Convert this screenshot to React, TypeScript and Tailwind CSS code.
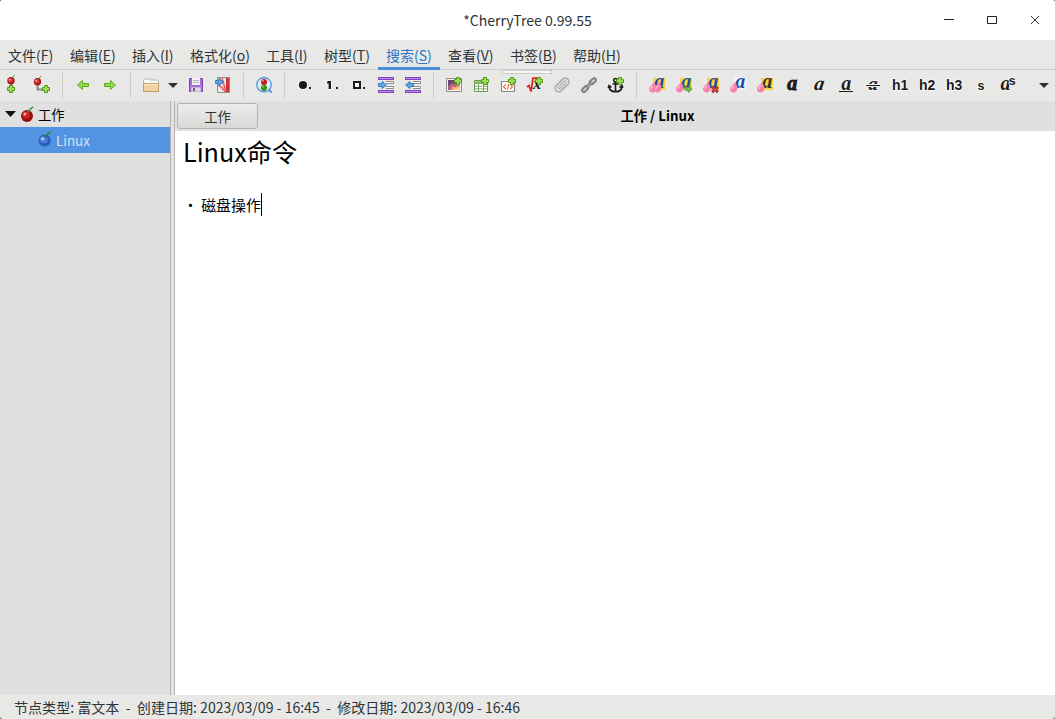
import type { ReactNode } from "react";

const menus = [
  { label: "文件", key: "F", w: "w-[62px]" },
  { label: "编辑", key: "E", w: "w-[62px]" },
  { label: "插入", key: "I", w: "w-[58px]" },
  { label: "格式化", key: "o", w: "w-[76px]" },
  { label: "工具", key: "I", w: "w-[58px]" },
  { label: "树型", key: "T", w: "w-[62px]" },
  { label: "搜索", key: "S", w: "w-[62px]", active: true },
  { label: "查看", key: "V", w: "w-[62px]" },
  { label: "书签", key: "B", w: "w-[63px]" },
  { label: "帮助", key: "H", w: "w-[62px]" },
];

function Tool({ children, label }: { children: ReactNode; label: string }) {
  return (
    <button aria-label={label} className="flex h-full w-[27px] shrink-0 items-center pl-[5px]">
      <Icon>{children}</Icon>
    </button>
  );
}

function Icon({ children }: { children: ReactNode }) {
  return (
    <svg viewBox="0 0 16 16" className="block size-4 shrink-0 overflow-visible">
      {children}
    </svg>
  );
}

function Sep() {
  return (
    <div className="flex h-full w-[14px] shrink-0 items-center pl-[6px]">
      <div className="h-[26px] w-px bg-[#cdcdcb]" />
    </div>
  );
}

function Plus({ x, y }: { x: number; y: number }) {
  return (
    <path
      transform={`translate(${x} ${y})`}
      d="M2.5.5h3v2h2v3h-2v2h-3v-2h-2v-3h2z"
      fill="#9edb5c"
      stroke="#4f9a12"
    />
  );
}

function Berry({ cx, cy, r, light, dark, stem }: { cx: number; cy: number; r: number; light: string; dark: string; stem: string }) {
  return (
    <g>
      <circle cx={cx} cy={cy} r={r} fill={dark} />
      <ellipse cx={cx - r * 0.15} cy={cy - r * 0.15} rx={r * 0.65} ry={r * 0.6} fill={light} />
      <circle cx={cx - r * 0.35} cy={cy - r * 0.3} r={r * 0.25} fill="#fff" opacity=".65" />
      <path d={`M${cx} ${cy - r * 0.5}Q${cx + r * 0.4} ${cy - r} ${cx + r} ${cy - r * 1.5}`} fill="none" stroke={stem} strokeWidth={r * 0.25} />
    </g>
  );
}

function Drop({ x, y }: { x: number; y: number }) {
  return (
    <g transform={`translate(${x} ${y})`}>
      <path d="M5 0C6.8 2.8 8 5 7.4 7.3 6.8 9.6 4.9 10.9 2.7 10.4.2 9.7-.4 7.6.3 5.8 1.1 3.8 3.8 2.6 5 0z" fill="#f77fab" />
      <path d="M4.3 3.6C2.9 5 1.8 5.6 1.7 7.4" fill="none" stroke="#fbc0d4" strokeWidth="1.3" />
    </g>
  );
}

function Letter({ fill = "#1b4da8" }: { fill?: string }) {
  return (
    <text x="5.2" y="10.8" fontFamily="Liberation Serif, serif" fontSize="20" fontWeight="700" fontStyle="italic" fill={fill}>
      a
    </text>
  );
}

function Glyph({ text, size, x = 0, y = 13 }: { text: string; size: number; x?: number; y?: number }) {
  return (
    <text x={x} y={y} fontFamily="Liberation Sans, sans-serif" fontSize={size} fontWeight="700" fill="#1c1c1c" stroke="#fafafa" strokeWidth="1.6" paintOrder="stroke">
      {text}
    </text>
  );
}

function Italic({ x = 3.2, y = 13, bold = false, size = 20 }: { x?: number; y?: number; bold?: boolean; size?: number }) {
  return (
    <text x={x} y={y} fontFamily="Liberation Serif, serif" fontSize={size} fontWeight="700" fontStyle="italic" fill="#1c1c1c" stroke={bold ? "#1c1c1c" : "#fafafa"} strokeWidth={bold ? 0.9 : 1.2} paintOrder="stroke">
      a
    </text>
  );
}

function Arrow({ left = false }: { left?: boolean }) {
  return (
    <path
      transform={left ? undefined : "matrix(-1 0 0 1 16 0)"}
      d="M2.5 8l5-4.5v3h6v3h-6v3z"
      fill="#93d94a"
      stroke="#5eaa28"
      strokeLinejoin="round"
    />
  );
}

function Indent({ left = false }: { left?: boolean }) {
  return (
    <>
      <path d="M0 1.5h16M0 14.5h16" stroke="#8443bd" strokeWidth="3" />
      <path d="M1 1.5h14M1 14.5h14" stroke="#b98be4" strokeWidth="1" />
      <path d="M8 4.5h7.5v2H8m0 3h7.5v2H8" fill="#fff" stroke="#8c8e8a" />
      <path
        transform={left ? "matrix(-1 0 0 1 9 0)" : undefined}
        d="M.5 6.5h3.7V4.4L8.4 8l-4.2 3.6V9.5H.5z"
        fill="#5ea9ee"
        stroke="#2e6fb7"
        strokeWidth=".9"
      />
    </>
  );
}

function Links() {
  return (
    <g fill="none">
      <g stroke="#858784" strokeWidth="2.2">
        <rect x="-3.4" y="-1.8" width="6.8" height="3.6" rx="1.8" transform="translate(4.1 12) rotate(-42)" />
        <rect x="-3.4" y="-1.8" width="6.8" height="3.6" rx="1.8" transform="translate(11.9 4.2) rotate(-42)" />
      </g>
      <path d="M5 11l6-5.8" stroke="#777976" strokeWidth="3" />
      <path d="M5 11l6-5.8" stroke="#c4c6c3" strokeWidth="1" />
    </g>
  );
}

function Caret() {
  return (
    <svg viewBox="0 0 10 5" className="h-[5px] w-[10px]">
      <path d="M0 0h10L5 5z" fill="#2e3436" />
    </svg>
  );
}

function Toolbar() {
  return (
    <div className="flex h-[31px] items-center bg-[#e8e8e6] pb-px">
      <button aria-label="添加节点" className="flex h-full w-[29px] shrink-0 items-center pl-[3px]">
        <Icon>
          <path d="M8 6v4" stroke="#888" strokeWidth="2" />
          <Berry cx={8} cy={3.7} r={3.7} light="#d83a3f" dark="#ad171f" stem="#39731a" />
          <Plus x={4} y={8} />
        </Icon>
      </button>
      <Tool label="添加子节点">
        <path d="M3.5 7v5.5H10" fill="none" stroke="#888a85" strokeWidth="2" />
        <Berry cx={3.5} cy={4.7} r={3.7} light="#d83a3f" dark="#ad171f" stem="#39731a" />
        <Plus x={8} y={8} />
      </Tool>
      <Sep />
      <Tool label="后退"><Arrow left /></Tool>
      <Tool label="前进"><Arrow /></Tool>
      <Sep />
      <Tool label="打开">
        <path d="M.5 14.5v-11l1-1.5h4.8l1 1h7.2l1 1v10.5z" fill="#f9f9f7" stroke="#b5b3ad" />
        <path d="M.5 6.5h15v8H.5z" fill="#efd3a6" stroke="#c49c65" />
        <path d="M1 7.5h14" stroke="#faeacb" />
      </Tool>
      <button aria-label="最近文档" className="flex w-[18px] shrink-0 items-center pl-[3px]">
        <Caret />
      </button>
      <Tool label="保存">
        <path d="M1.5 1.5h13v13h-13z" fill="#a96add" stroke="#7f3fb6" />
        <path d="M4 1h8v7H4z" fill="#f5f2f8" />
        <path d="M5 3.5h6M5 5.5h6" stroke="#b5b5b5" />
        <path d="M3.5 10.5h9v4h-9z" fill="#ddd" stroke="#c6b6d2" />
        <path d="M5 11h2v3H5z" fill="#7750a0" />
      </Tool>
      <Tool label="导出 PDF">
        <path d="M2.5.5h12v15h-12z" fill="#e8e8e8" stroke="#8c8e8b" />
        <path d="M11 1h3v14h-3z" fill="#d23035" />
        <path d="M3.5 8c2 1 5 4 7 7M7 1c1 4 2 8 4 13" fill="none" stroke="#ef5b5f" strokeWidth="1.6" />
        <path d="M.5 3.6h3.4V1.3l4.4 3.7-4.4 3.7V6.4H.5z" fill="#5fa9ed" stroke="#2e70ba" strokeWidth=".9" />
      </Tool>
      <Sep />
      <Tool label="查找">
        <path d="M13 13l2.5 2.5" stroke="#4f8edb" strokeWidth="2" />
        <circle cx="8" cy="7.7" r="7.2" fill="#dceefb" stroke="#5793d8" strokeWidth="1.3" />
        <circle cx="8" cy="4.9" r="3" fill="#c8191e" />
        <circle cx="8" cy="10.8" r="3.1" fill="#3d9119" />
        <circle cx="7" cy="3.9" r=".8" fill="#ffb0a6" />
        <circle cx="7" cy="9.7" r=".8" fill="#b4e78c" />
      </Tool>
      <Sep />
      <Tool label="无序列表">
        <circle cx="6" cy="8" r="5" fill="#fafafa" />
        <circle cx="6" cy="8" r="4.1" fill="#191919" />
        <path d="M12 10h2v2h-2z" fill="#191919" stroke="#fafafa" paintOrder="stroke" />
      </Tool>
      <Tool label="有序列表">
        <path d="M4 4h3v8H4.6V6.5H3V5z" fill="#191919" stroke="#fafafa" strokeWidth="1.4" paintOrder="stroke" />
        <path d="M12 10h2v2h-2z" fill="#191919" stroke="#fafafa" paintOrder="stroke" />
      </Tool>
      <Tool label="任务列表">
        <path d="M3 5h6v6H3z" fill="#fafafa" stroke="#191919" strokeWidth="2" />
        <path d="M12 10h2v2h-2z" fill="#191919" stroke="#fafafa" paintOrder="stroke" />
      </Tool>
      <Tool label="增加缩进"><Indent /></Tool>
      <Tool label="减少缩进"><Indent left /></Tool>
      <Sep />
      <Tool label="插入图片">
        <path d="M.5 1.5h15v13H.5z" fill="#f4f4f4" stroke="#8e908d" />
        <path d="M2 3h12v10H2z" fill="#6e4375" />
        <path d="M2 13V9l4-3 4 1 4-1v7z" fill="#b0607f" />
        <path d="M5 13l1-4 3 1 5-3v6z" fill="#f39a74" />
        <path d="M7 13l2-2 5-1v3z" fill="#ffcf7c" />
        <Plus x={8} y={0} />
      </Tool>
      <Tool label="插入表格">
        <path d="M1.5 3.5h13v11h-13z" fill="#fff" stroke="#6d9950" />
        <path d="M2 4h12v2H2z" fill="#91c66a" />
        <path d="M2 6.5h12M2 9.2h12M2 11.9h12M5.5 6v8M10.5 6v8" stroke="#80a76a" />
        <Plus x={8} y={0} />
      </Tool>
      <Tool label="插入代码框">
        <path d="M1.5 4.5h13v10h-13z" fill="#fff" stroke="#8b8d89" strokeWidth="1.2" />
        <path d="M5.8 7.2L3.5 9.7l2.3 2.5m4.4-5l2.3 2.5-2.3 2.5M8.8 6.9l-1.5 5.8" fill="none" stroke="#ec6431" strokeWidth="1.1" />
        <Plus x={8} y={0} />
      </Tool>
      <Tool label="插入公式">
        <path d="M0 10l2-1.5 2 6L6 1.2h8" fill="none" stroke="#d92727" strokeWidth="1.8" />
        <text x="6" y="12" fontFamily="Liberation Serif, serif" fontWeight="700" fontStyle="italic" fontSize="16" fill="#161616">x</text>
        <Plus x={8} y={0} />
      </Tool>
      <Tool label="附加文件">
        <g transform="rotate(45 8 8)" fill="none">
          <rect x="4.4" y="-.2" width="7.2" height="16.4" rx="3.6" stroke="#afb0ad" strokeWidth="1.7" />
          <rect x="6.8" y="3" width="2.4" height="9.8" rx="1.2" stroke="#b5b6b3" strokeWidth="1.4" />
        </g>
      </Tool>
      <Tool label="插入链接"><Links /></Tool>
      <Tool label="插入锚点">
        <path d="M7.5 5v9M4.5 7h6M1 10c.5 3 3 4.8 6.5 4.8s6-1.8 6.5-4.8M.2 11l.8-2.5 2.5 1.8m8 0L14 8.5l.8 2.5" fill="none" stroke="#1d1e1e" strokeWidth="1.6" />
        <circle cx="7.5" cy="3.2" r="1.8" fill="none" stroke="#1d1e1e" strokeWidth="1.5" />
        <Plus x={8} y={0} />
      </Tool>
      <Sep />
      <Tool label="格式刷">
        <path d="M4 1h12v12H4z" fill="#fad43c" />
        <Letter />
        <Drop x={0} y={5} /><Drop x={5} y={5} />
      </Tool>
      <Tool label="应用最近格式">
        <path d="M4 1h12v12H4z" fill="#fad43c" />
        <Letter />
        <Drop x={0} y={5} />
        <path d="M8 10c2 1.4 3.5 1.2 5 0V8.6l3 3.4-3.5 3.4V14C10.5 14.2 8 12.6 7.5 10z" fill="#77be4d" stroke="#46932a" strokeWidth=".8" />
      </Tool>
      <Tool label="清除格式">
        <path d="M4 1h12v12H4z" fill="#fad43c" />
        <Letter />
        <Drop x={0} y={5} />
        <path d="M9 10l6 5.2M15 10l-6 5.2" stroke="#a52b3c" strokeWidth="2.9" />
        <path d="M9.5 10.4l5 4.4m0-4.4l-5 4.4" stroke="#d95767" />
      </Tool>
      <Tool label="文字颜色">
        <path d="M4 .5h12v12H4z" fill="#f4f4f4" />
        <Letter /><Drop x={0} y={5} />
      </Tool>
      <Tool label="背景颜色">
        <path d="M4 1h12v12H4z" fill="#fad43c" />
        <Letter fill="#333" /><Drop x={0} y={5} />
      </Tool>
      <Tool label="粗体"><Italic bold /></Tool>
      <Tool label="斜体">
        <g transform="translate(2 0) skewX(-9)"><Italic x={2.6} size={20} /></g>
      </Tool>
      <Tool label="下划线"><Italic y={12.6} size={20} /><path d="M1 14.5h14" stroke="#1c1c1c" /></Tool>
      <Tool label="删除线">
        <Italic y={12.7} size={19} /><path d="M0 8.5h16" stroke="#f2f2f1" strokeWidth="3" /><path d="M1 8.5h14" stroke="#1c1c1c" />
      </Tool>
      <Tool label="标题一"><Glyph text="h1" size={14} /></Tool>
      <Tool label="标题二"><Glyph text="h2" size={14} /></Tool>
      <Tool label="标题三"><Glyph text="h3" size={14} /></Tool>
      <Tool label="小号字"><Glyph text="s" size={12.5} x={4.6} /></Tool>
      <Tool label="上标">
        <Italic x={0.5} />
        <Glyph text="s" size={12.5} x={8.8} y={8} />
      </Tool>
      <button aria-label="更多" className="ml-auto flex w-[16px] shrink-0 items-center">
        <Caret />
      </button>
    </div>
  );
}

export default function App() {
  return (
    <div className="bg-[#6b6b72]">
      <div className="flex h-[719px] w-[1055px] flex-col overflow-hidden rounded-[3px] bg-[#e8e8e6] font-['Noto_Sans_CJK_SC',sans-serif] text-[14px] text-[#2e3436]">
        <header className="grid h-10 shrink-0 grid-cols-[1fr_auto_1fr] items-center bg-white">
          <div />
          <h1 className="text-[14.05px] leading-5">*CherryTree 0.99.55</h1>
          <div className="flex items-center justify-end gap-[31px] pr-[14px]">
            <svg viewBox="0 0 12 12" className="size-3"><path d="M1 5.5h10" stroke="#222" /></svg>
            <svg viewBox="0 0 12 12" className="size-3"><path d="M1.5 2.5h9v7h-9z" fill="none" stroke="#222" /></svg>
            <svg viewBox="0 0 12 12" className="size-3"><path d="M2 2l8 8M10 2l-8 8" stroke="#333" /></svg>
          </div>
        </header>

        <nav className="relative flex h-[30px] shrink-0 border-b border-[#cdcdcb]">
          {menus.map((m) => (
            <div
              key={m.label}
              className={`${m.w} -mb-px flex shrink-0 items-start whitespace-nowrap border-b-[3px] px-2 pt-[5px] leading-5 ${
                m.active ? "border-[#4a90d9] text-[#2a76c6]" : "border-transparent"
              }`}
            >
              {m.label}(<span className="underline underline-offset-2">{m.key}</span>)
            </div>
          ))}
          <div className="absolute left-[502px] top-[30px] h-[4px] w-[50px] border border-[#cbcbc9] bg-[#f7f7f7]" />
        </nav>

        <Toolbar />

        <main className="flex min-h-0 flex-1">
          <aside className="w-[170px] shrink-0 bg-[#e0e0e0]">
            <div className="flex h-[26px] items-center pl-[5px] pt-[2px] text-black">
              <svg viewBox="0 0 11 6" className="-mt-0.5 mr-1 h-[6px] w-[11px]"><path d="M0 0h11L5.5 6z" fill="#111" /></svg>
              <Icon><Berry cx={7} cy={8.9} r={6} light="#cf2023" dark="#9a0a0e" stem="#4c9130" /></Icon>
              <span className="ml-[2px] text-[13.3px]">工作</span>
            </div>
            <div className="flex h-[26px] items-center bg-[#5294e2] pl-[38px] text-[#d4e3f4]">
              <Icon><Berry cx={6.7} cy={8.5} r={6} light="#4a7fe3" dark="#2c5cc0" stem="#35762b" /></Icon>
              <span className="ml-[2px] text-[13.4px]">Linux</span>
            </div>
          </aside>
          <div className="w-[5px] shrink-0 border-x border-[#b3b3b1] bg-[#e3e3e1]" />
          <section className="flex min-w-0 flex-1 flex-col bg-white text-black">
            <div className="flex h-[30px] shrink-0 items-center bg-[#e0e0e0] pl-[2px]">
              <button className="flex h-[26px] w-[81px] items-center justify-center rounded-[3px] border border-[#b3b3b1] bg-linear-to-b from-[#ececea] to-[#d8d8d6] pt-px text-[13.3px] text-[#2e3436]">
                工作
              </button>
              <div className="flex-1 pl-[2px] text-center text-[13.3px] font-bold">工作 / Linux</div>
            </div>
            <div className="px-2 pt-px">
              <p className="h-[54px] text-[25.2px] leading-[38px]">Linux命令</p>
              <div className="flex items-center pt-[7px]">
                <p className="whitespace-pre text-[14.9px] leading-[23px]">• 磁盘操作</p>
                <div className="h-[23px] w-px bg-black" />
              </div>
            </div>
          </section>
        </main>

        <footer className="flex h-6 shrink-0 items-center whitespace-pre pb-px pl-[14px] text-[14.05px] leading-5">
          {"节点类型: 富文本  -  创建日期: 2023/03/09 - 16:45  -  修改日期: 2023/03/09 - 16:46"}
        </footer>
      </div>
    </div>
  );
}
